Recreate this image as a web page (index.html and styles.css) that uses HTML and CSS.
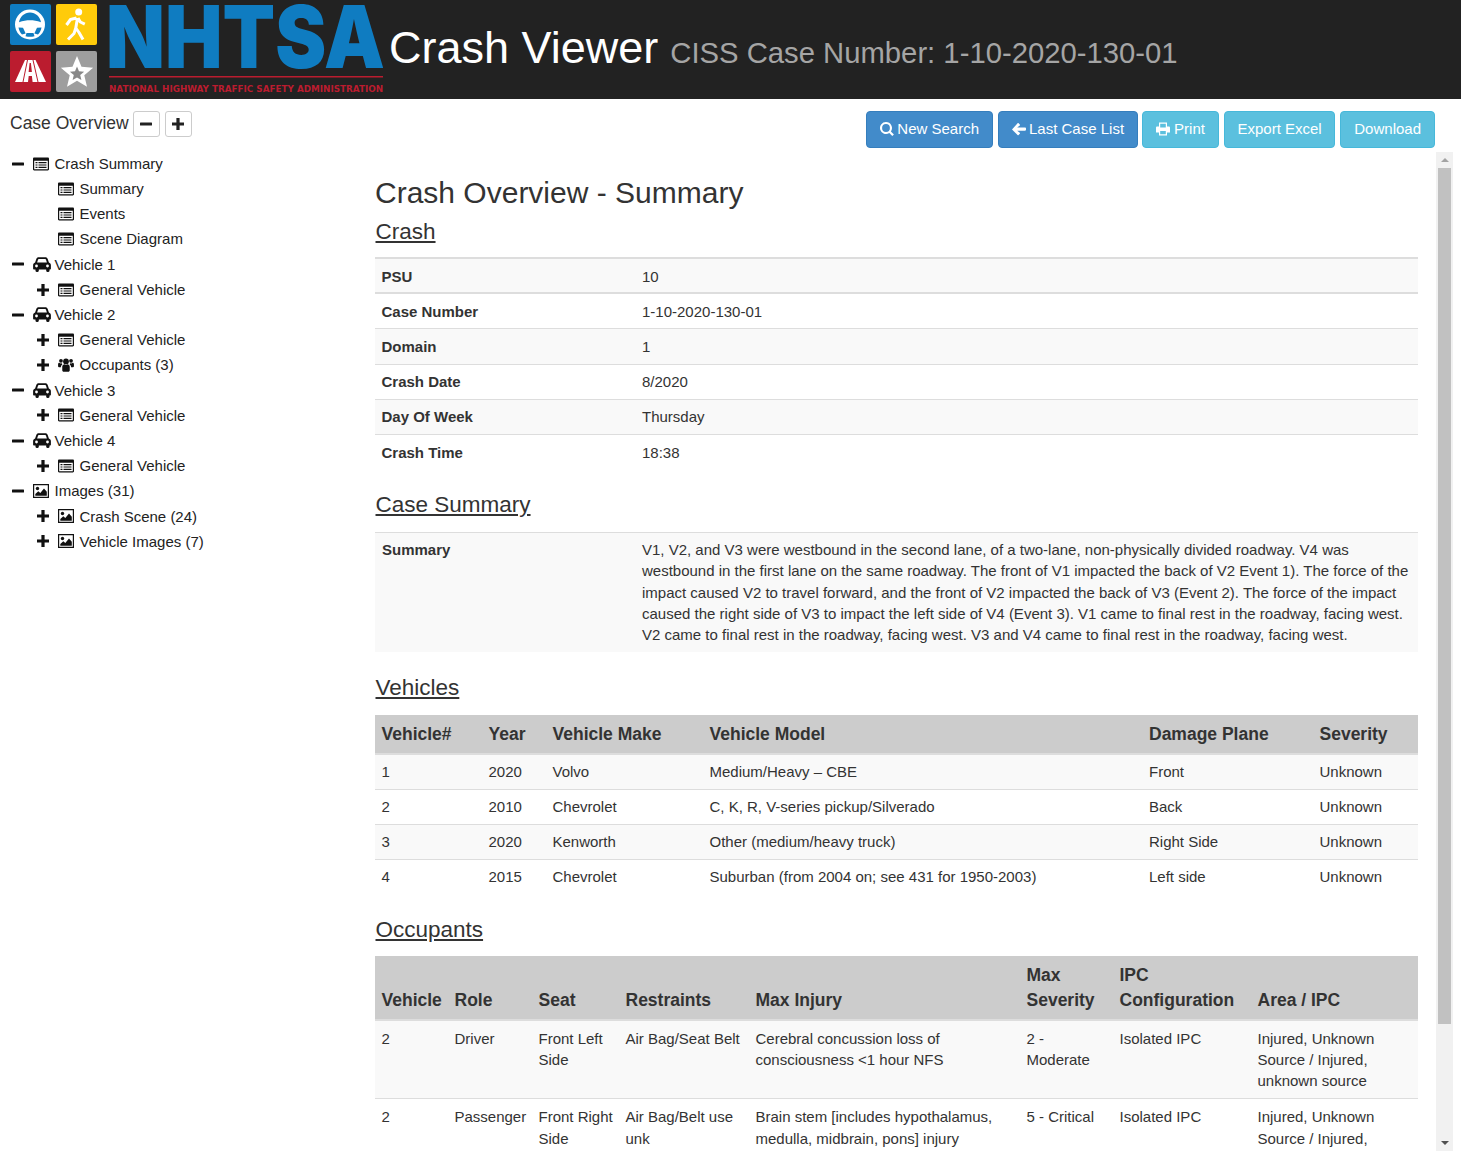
FILE: index.html
```html
<!DOCTYPE html>
<html lang="en">
<head>
<meta charset="utf-8">
<title>Crash Viewer</title>
<link rel="stylesheet" href="styles.css">
</head>
<body>
<svg class="sprite" xmlns="http://www.w3.org/2000/svg">
  <symbol id="i-minus" viewBox="0 0 12 12"><rect x="0" y="4.4" width="12" height="3.2" rx=".5"/></symbol>
  <symbol id="i-plus" viewBox="0 0 12 12"><path d="M4.4 0h3.2v4.4H12v3.2H7.6V12H4.4V7.6H0V4.4h4.4z"/></symbol>
  <symbol id="i-list" viewBox="0 0 16 13"><path fill-rule="evenodd" d="M1.2 0h13.6C15.5 0 16 .5 16 1.2v10.6c0 .7-.5 1.2-1.2 1.2H1.2C.5 13 0 12.500 0 11.800V1.200C0 .5.500 0 1.200 0zM1.200 3.200v8.600h13.600V3.200z"/><path d="M2.500 4.600h2v1.200h-2zM5.500 4.600h8v1.200h-8zM2.500 6.900h2v1.200h-2zM5.500 6.900h8v1.200h-8zM2.500 9.200h2v1.200h-2zM5.500 9.200h8v1.200h-8z"/></symbol>
  <symbol id="i-car" viewBox="0 0 18 15"><path fill-rule="evenodd" d="M3.300 2C3.700.8 4.600.3 5.600.3h6.800c1 0 1.900.5 2.300 1.700l1.200 3.600c1.200.4 2 1.400 2 2.600v3.600c0 .5-.3.800-.8.800h-.6v1.200c0 .7-.5 1.200-1.200 1.200h-.9c-.7 0-1.200-.5-1.200-1.200v-1.200H5.800v1.200c0 .7-.5 1.200-1.200 1.200h-.9c-.7 0-1.200-.5-1.200-1.200v-1.200H.9c-.5 0-.8-.3-.8-.8V8.200c0-1.200.8-2.200 2-2.600zM5.800 2.100c-.4 0-.7.2-.8.600L4.100 5.500h9.800l-.9-2.800c-.1-.4-.4-.6-.8-.6zM3.500 7.600a1.400 1.400 0 1 0 0 2.800 1.400 1.400 0 0 0 0-2.800zM14.500 7.600a1.400 1.400 0 1 0 0 2.800 1.400 1.400 0 0 0 0-2.800z"/></symbol>
  <symbol id="i-pic" viewBox="0 0 16 14"><path fill-rule="evenodd" d="M0 0h16v14H0zM1.200 1.200v11.600h13.600V1.200z"/><circle cx="4.500" cy="4.500" r="1.700"/><path d="M2.300 11.700V10l3-2.800 2 1.800 3.700-4.600 2.800 3.400v3.900z"/></symbol>
  <symbol id="i-users" viewBox="0 0 17 15"><circle cx="8.500" cy="3.700" r="3.100"/><circle cx="3.100" cy="3" r="2"/><circle cx="13.900" cy="3" r="2"/><path d="M4.500 9.500c0-1.800 1.200-2.900 2.400-2.900.5.500 1 .7 1.600.7s1.100-.2 1.600-.7c1.200 0 2.400 1.100 2.400 2.900v3.700c0 1-.7 1.600-1.600 1.600H6.100c-.9 0-1.600-.6-1.600-1.600zM0 6.800c0-1 .6-1.600 1.300-1.600.5.400 1.100.6 1.800.6.300 0 .6 0 .9-.1.100.5.300 1 .6 1.300-.9.600-1.500 1.500-1.600 2.900H1.100C.4 9.900 0 9.500 0 8.800zM17 6.800c0-1-.6-1.600-1.300-1.600-.5.400-1.100.6-1.800.6-.3 0-.6 0-.9-.1-.1.500-.3 1-.6 1.300.9.600 1.500 1.500 1.600 2.900h1.900c.7 0 1.100-.4 1.100-1.100z"/></symbol>
  <symbol id="i-search" viewBox="0 0 14 14"><path fill-rule="evenodd" d="M6 0a6 6 0 0 1 4.900 9.400l3 3-1.600 1.600-3-3A6 6 0 1 1 6 0zm0 2.100a3.900 3.900 0 1 0 0 7.800 3.900 3.900 0 0 0 0-7.800z"/></symbol>
  <symbol id="i-back" viewBox="0 0 14 14"><path d="M6.600 1.200 7.800 2.400c.3.300.3.700 0 1L5.200 5.500H13c.5 0 1 .4 1 1v1.300c0 .5-.5 .9-1 .9H5.200l2.600 2.100c.3.300.3.700 0 1l-1.200 1.200c-.3.300-.7.300-1 0L0 7.500 5.600 1.200c.3-.3.700-.3 1 0z"/></symbol>
  <symbol id="i-print" viewBox="0 0 14 13"><path fill-rule="evenodd" d="M3 0h8v4h1.800c.7 0 1.200.5 1.200 1.200V10h-3v3H3v-3H0V5.200C0 4.500.5 4 1.200 4H3zm1.200 1.200V5h5.600V1.200zM4.200 8.500v3.300h5.600V8.500z"/></symbol>
</svg>

<header class="topbar">
  <svg class="logo" viewBox="0 0 383 99" xmlns="http://www.w3.org/2000/svg">
    <rect x="10" y="4" width="41" height="41" rx="2" fill="#0f7cc1"/>
    <rect x="56" y="4" width="41" height="41" rx="2" fill="#ffcb0a"/>
    <rect x="10" y="51" width="41" height="41" rx="2" fill="#bb1c2f"/>
    <rect x="56" y="51" width="41" height="41" rx="2" fill="#9e9e9e"/>

    <circle cx="30" cy="24.500" r="15" fill="#fff"/>
    <path d="M19 22.300C19.800 16.800 24.500 12.500 30 12.500S40.200 16.800 41 22.300C37 20.800 33.500 20.300 30 20.300S23 20.800 19 22.300z" fill="#0f7cc1"/>
    <path d="M18.500 27.500 23 27.800 25.700 33.500 22 34.500C20 32.500 19 30.300 18.500 27.500zM41.500 27.500 37 27.800 34.300 33.500 38 34.500C40 32.500 41 30.300 41.500 27.500zM26.500 33h7l1 3.200c-3 .8-6 .8-9 0z" fill="#0f7cc1"/>

    <circle cx="78.700" cy="12" r="3.500" fill="#fff"/>
    <path d="M77.500 18 75.800 28M76.500 18 70.500 19.500 66.500 25M78 18 80.300 22 84.800 24.200M75.800 28 79 32.500 83 39.500M75.800 28 74 33.500 68 39.500" fill="none" stroke="#fff" stroke-width="3" stroke-linejoin="round"/>

    <path d="M25 60h10.500L46 82H15z" fill="#fff"/>
    <path d="M27.500 60 23 82M33 60 38 82" stroke="#bb1c2f" stroke-width="1" fill="none"/>
    <path d="M29.600 63h1.300l1 9h-3.300zM28.700 76h3.200l.7 6h-4.600z" fill="#bb1c2f"/>

    <polygon transform="translate(77 73) scale(17)" fill="#fff" points="0,-1 .265,-.364 .951,-.309 .428,.139 .588,.809 0,.45 -.588,.809 -.428,.139 -.951,-.309 -.265,-.364"/>
    <polygon transform="translate(77 74) scale(7.500)" fill="#888" points="0,-1 .265,-.364 .951,-.309 .428,.139 .588,.809 0,.45 -.588,.809 -.428,.139 -.951,-.309 -.265,-.364"/>

    <text class="logo-big" x="106" y="68" textLength="279" lengthAdjust="spacingAndGlyphs">NHTSA</text>
    <rect x="109" y="76" width="274" height="1.500" fill="#bb1c2f"/>
    <text class="logo-small" x="109" y="91.500" textLength="274" lengthAdjust="spacingAndGlyphs">NATIONAL HIGHWAY TRAFFIC SAFETY ADMINISTRATION</text>
  </svg>
  <span class="app-title">Crash Viewer</span>
  <span class="case-title">CISS Case Number: 1-10-2020-130-01</span>
</header>

<div class="layout">
  <aside class="side">
    <div class="side-head">
      <span class="side-title">Case Overview</span>
      <button class="mini"><svg class="ic12"><use href="#i-minus"/></svg></button>
      <button class="mini"><svg class="ic12"><use href="#i-plus"/></svg></button>
    </div>
    <ul class="tree">
      <li class="n1"><svg class="tog"><use href="#i-minus"/></svg><svg class="ico"><use href="#i-list"/></svg><span>Crash Summary</span></li>
      <li class="n2"><span class="tog"></span><svg class="ico"><use href="#i-list"/></svg><span>Summary</span></li>
      <li class="n2"><span class="tog"></span><svg class="ico"><use href="#i-list"/></svg><span>Events</span></li>
      <li class="n2"><span class="tog"></span><svg class="ico"><use href="#i-list"/></svg><span>Scene Diagram</span></li>
      <li class="n1"><svg class="tog"><use href="#i-minus"/></svg><svg class="ico car"><use href="#i-car"/></svg><span>Vehicle 1</span></li>
      <li class="n2"><svg class="tog"><use href="#i-plus"/></svg><svg class="ico"><use href="#i-list"/></svg><span>General Vehicle</span></li>
      <li class="n1"><svg class="tog"><use href="#i-minus"/></svg><svg class="ico car"><use href="#i-car"/></svg><span>Vehicle 2</span></li>
      <li class="n2"><svg class="tog"><use href="#i-plus"/></svg><svg class="ico"><use href="#i-list"/></svg><span>General Vehicle</span></li>
      <li class="n2"><svg class="tog"><use href="#i-plus"/></svg><svg class="ico"><use href="#i-users"/></svg><span>Occupants (3)</span></li>
      <li class="n1"><svg class="tog"><use href="#i-minus"/></svg><svg class="ico car"><use href="#i-car"/></svg><span>Vehicle 3</span></li>
      <li class="n2"><svg class="tog"><use href="#i-plus"/></svg><svg class="ico"><use href="#i-list"/></svg><span>General Vehicle</span></li>
      <li class="n1"><svg class="tog"><use href="#i-minus"/></svg><svg class="ico car"><use href="#i-car"/></svg><span>Vehicle 4</span></li>
      <li class="n2"><svg class="tog"><use href="#i-plus"/></svg><svg class="ico"><use href="#i-list"/></svg><span>General Vehicle</span></li>
      <li class="n1"><svg class="tog"><use href="#i-minus"/></svg><svg class="ico"><use href="#i-pic"/></svg><span>Images (31)</span></li>
      <li class="n2"><svg class="tog"><use href="#i-plus"/></svg><svg class="ico"><use href="#i-pic"/></svg><span>Crash Scene (24)</span></li>
      <li class="n2"><svg class="tog"><use href="#i-plus"/></svg><svg class="ico"><use href="#i-pic"/></svg><span>Vehicle Images (7)</span></li>
    </ul>
  </aside>

  <main class="main">
    <div class="toolbar">
      <a class="btn primary"><svg class="bi"><use href="#i-search"/></svg>New Search</a>
      <a class="btn primary"><svg class="bi"><use href="#i-back"/></svg>Last Case List</a>
      <a class="btn info btn-print"><svg class="bi"><use href="#i-print"/></svg>Print</a>
      <a class="btn info btn-export">Export Excel</a>
      <a class="btn info">Download</a>
    </div>
    <div class="pane">
      <div class="content">
        <h1 class="page-title">Crash Overview - Summary</h1>
        <h2 class="section first">Crash</h2>
        <table class="kv">
          <tbody>
            <tr class="top odd"><th>PSU</th><td>10</td></tr>
            <tr><th>Case Number</th><td>1-10-2020-130-01</td></tr>
            <tr class="odd"><th>Domain</th><td>1</td></tr>
            <tr><th>Crash Date</th><td>8/2020</td></tr>
            <tr class="odd"><th>Day Of Week</th><td>Thursday</td></tr>
            <tr class="plain"><th>Crash Time</th><td>18:38</td></tr>
          </tbody>
        </table>

        <h2 class="section s-case">Case Summary</h2>
        <table class="kv summary">
          <tbody>
            <tr class="odd"><th>Summary</th><td>V1, V2, and V3 were westbound in the second lane, of a two-lane, non-physically divided roadway. V4 was westbound in the first lane on the same roadway. The front of V1 impacted the back of V2 Event 1). The force of the impact caused V2 to travel forward, and the front of V2 impacted the back of V3 (Event 2). The force of the impact caused the right side of V3 to impact the left side of V4 (Event 3). V1 came to final rest in the roadway, facing west. V2 came to final rest in the roadway, facing west. V3 and V4 came to final rest in the roadway, facing west.</td></tr>
          </tbody>
        </table>

        <h2 class="section s-veh">Vehicles</h2>
        <table class="grid vehicles">
          <colgroup><col class="v1"><col class="v2"><col class="v3"><col class="v4"><col class="v5"><col></colgroup>
          <thead><tr><th>Vehicle#</th><th>Year</th><th>Vehicle Make</th><th>Vehicle Model</th><th>Damage Plane</th><th>Severity</th></tr></thead>
          <tbody>
            <tr class="odd"><td>1</td><td>2020</td><td>Volvo</td><td>Medium/Heavy – CBE</td><td>Front</td><td>Unknown</td></tr>
            <tr><td>2</td><td>2010</td><td>Chevrolet</td><td>C, K, R, V-series pickup/Silverado</td><td>Back</td><td>Unknown</td></tr>
            <tr class="odd"><td>3</td><td>2020</td><td>Kenworth</td><td>Other (medium/heavy truck)</td><td>Right Side</td><td>Unknown</td></tr>
            <tr><td>4</td><td>2015</td><td>Chevrolet</td><td>Suburban (from 2004 on; see 431 for 1950-2003)</td><td>Left side</td><td>Unknown</td></tr>
          </tbody>
        </table>

        <h2 class="section s-occ">Occupants</h2>
        <table class="grid occupants">
          <colgroup><col class="o1"><col class="o2"><col class="o3"><col class="o4"><col class="o5"><col class="o6"><col class="o7"><col></colgroup>
          <thead><tr><th>Vehicle</th><th>Role</th><th>Seat</th><th>Restraints</th><th>Max Injury</th><th>Max Severity</th><th>IPC Configuration</th><th>Area / IPC</th></tr></thead>
          <tbody>
            <tr class="odd"><td>2</td><td>Driver</td><td>Front Left Side</td><td>Air Bag/Seat Belt</td><td>Cerebral concussion loss of consciousness &lt;1 hour NFS</td><td>2 - Moderate</td><td>Isolated IPC</td><td>Injured, Unknown Source / Injured, unknown source</td></tr>
            <tr><td>2</td><td>Passenger</td><td>Front Right Side</td><td>Air Bag/Belt use unk</td><td>Brain stem [includes hypothalamus, medulla, midbrain, pons] injury</td><td>5 - Critical</td><td>Isolated IPC</td><td>Injured, Unknown Source / Injured, unknown source</td></tr>
          </tbody>
        </table>
      </div>
      <div class="scrollbar">
        <span class="arrow up"></span>
        <span class="thumb"></span>
        <span class="track"></span>
        <span class="arrow down"></span>
      </div>
    </div>
  </main>
</div>
</body>
</html>
```
FILE: styles.css
```css
* { box-sizing: border-box; }
html, body { margin: 0; height: 1151px; overflow: hidden; }
body {
  font-family: "Liberation Sans", Arial, sans-serif;
  font-size: 15px;
  line-height: 1.42857;
  color: #333;
  background: #fff;
  display: flex;
  flex-direction: column;
}
.sprite { display: none; }

.topbar {
  height: 99px;
  flex: none;
  background: #222;
  display: flex;
  align-items: baseline;
  overflow: hidden;
}
.logo { width: 383px; height: 99px; flex: none; align-self: flex-start; }
.logo-big { font-family: Inter, sans-serif; font-weight: 900; font-size: 87px; fill: #0f7cc1; }
.logo-small { font-family: "DejaVu Sans", sans-serif; font-weight: 700; font-size: 8px; fill: #bb1c2f; }
.app-title {
  font-size: 45px;
  line-height: 96px;
  color: #fff;
  margin-left: 6px;
  margin-right: 12px;
}
.case-title { font-size: 29.25px; color: #a5a5a5; }

.layout { flex: 1; display: flex; min-height: 0; }
.side { width: 365px; flex: none; padding: 12px 0 0 10px; }
.side-head { display: flex; align-items: center; height: 26px; }
.side-title { font-size: 17.5px; margin-right: 4px; padding-bottom: 2px; }
.mini {
  width: 27px;
  height: 26px;
  margin-right: 5px;
  padding: 0;
  background: #fff;
  border: 1px solid #ccc;
  border-radius: 3px;
  display: flex;
  align-items: center;
  justify-content: center;
}
.ic12 { width: 12px; height: 12px; fill: #222; }

.tree { list-style: none; margin: 14px 0 0 2px; padding: 0; color: #222; }
.tree li { height: 25.2px; display: flex; align-items: center; }
.tree .n2 { padding-left: 25px; }
.tog { width: 12px; height: 12px; flex: none; fill: #111; margin-right: 9px; }
.ico { width: 16px; height: 14px; flex: none; fill: #111; margin-right: 5.5px; }
.ico.car { width: 18px; height: 15px; margin-right: 3.5px; }

.main { flex: 1; min-width: 0; display: flex; flex-direction: column; }
.toolbar {
  height: 53px;
  flex: none;
  display: flex;
  justify-content: flex-end;
  align-items: flex-start;
  gap: 5px;
  padding: 12px 26px 0 0;
}
.btn {
  height: 37px;
  padding: 6px 13px 8px;
  border: 1px solid transparent;
  border-radius: 4px;
  color: #fff;
  white-space: nowrap;
  display: flex;
  align-items: center;
}
.btn.primary { background: #428bca; border-color: #357ebd; }
.btn.info { background: #5bc0de; border-color: #46b8da; }
.btn-print { margin-left: -1px; }
.btn-print .bi { margin-right: 4px; }
.btn-export { padding-left: 12.6px; padding-right: 12.6px; }
.bi { width: 14px; height: 14px; fill: #fff; margin-right: 3px; flex: none; }

.pane { flex: 1; min-height: 0; display: flex; padding-right: 8px; }
.content { flex: 1; min-width: 0; overflow: hidden; padding-left: 10px; padding-right: 18px; }

.page-title { font-size: 30px; font-weight: 400; line-height: 33px; margin: 24px 0 0; }
.section { font-size: 22.5px; font-weight: 400; line-height: 26px; margin: 0; padding-left: .5px; text-decoration: underline; }
.section.first { margin-top: 10px; margin-bottom: 12px; }
.s-case { margin-top: 22px; margin-bottom: 14px; }
.s-veh { margin-top: 23px; margin-bottom: 14px; }
.s-occ { margin-top: 23px; margin-bottom: 13px; }

table { border-collapse: collapse; width: 100%; table-layout: fixed; }
.kv th { width: 261px; text-align: left; font-weight: 700; }
.kv th, .kv td { padding: 6.4px 6px; border-bottom: 1px solid #ddd; vertical-align: top; }
.kv th { padding-left: 6.5px; }
.kv .top th, .kv .top td { border-top: 2px solid #ddd; border-bottom-width: 2px; padding-top: 7px; padding-bottom: 4.8px; }
.kv .plain th, .kv .plain td { border-bottom: 0; padding-top: 7.4px; }
.odd { background: #f9f9f9; }
.summary th, .summary td { border-bottom: 0; border-top: 1px solid #ddd; padding-top: 5.5px; }
.summary th { padding-left: 7px; }

.grid thead th {
  background: #ccc;
  color: #333;
  font-size: 17.5px;
  font-weight: 700;
  line-height: 25px;
  text-align: left;
  vertical-align: bottom;
  padding: 7px 6px 6px 6.5px;
  border-bottom: 2px solid #ddd;
}
.grid td { padding: 6.3px 6px 6.3px 6.5px; border-bottom: 1px solid #ddd; vertical-align: top; }
.vehicles td { padding-top: 5.5px; padding-bottom: 7.1px; }
.occupants td { padding-top: 7.3px; padding-bottom: 5.3px; }
.occupants .odd td { padding-top: 6.3px; padding-bottom: 6.3px; }
.vehicles tbody tr:last-child td { border-bottom: 0; }
.v1 { width: 107px; } .v2 { width: 64px; } .v3 { width: 157px; } .v4 { width: 439.5px; } .v5 { width: 170.5px; }
.o1 { width: 73px; } .o2 { width: 84px; } .o3 { width: 87px; } .o4 { width: 130px; } .o5 { width: 271px; } .o6 { width: 93px; } .o7 { width: 138px; }

.scrollbar { width: 17px; flex: none; background: #f1f1f1; display: flex; flex-direction: column; align-items: center; }
.arrow { height: 16px; flex: none; display: flex; align-items: center; }
.arrow::before { content: ""; border-left: 4px solid transparent; border-right: 4px solid transparent; }
.up::before { border-bottom: 4px solid #a3a3a3; }
.down::before { border-top: 4px solid #505050; }
.thumb { width: 13px; height: 856px; flex: none; background: #c1c1c1; }
.track { flex: 1; }
```
